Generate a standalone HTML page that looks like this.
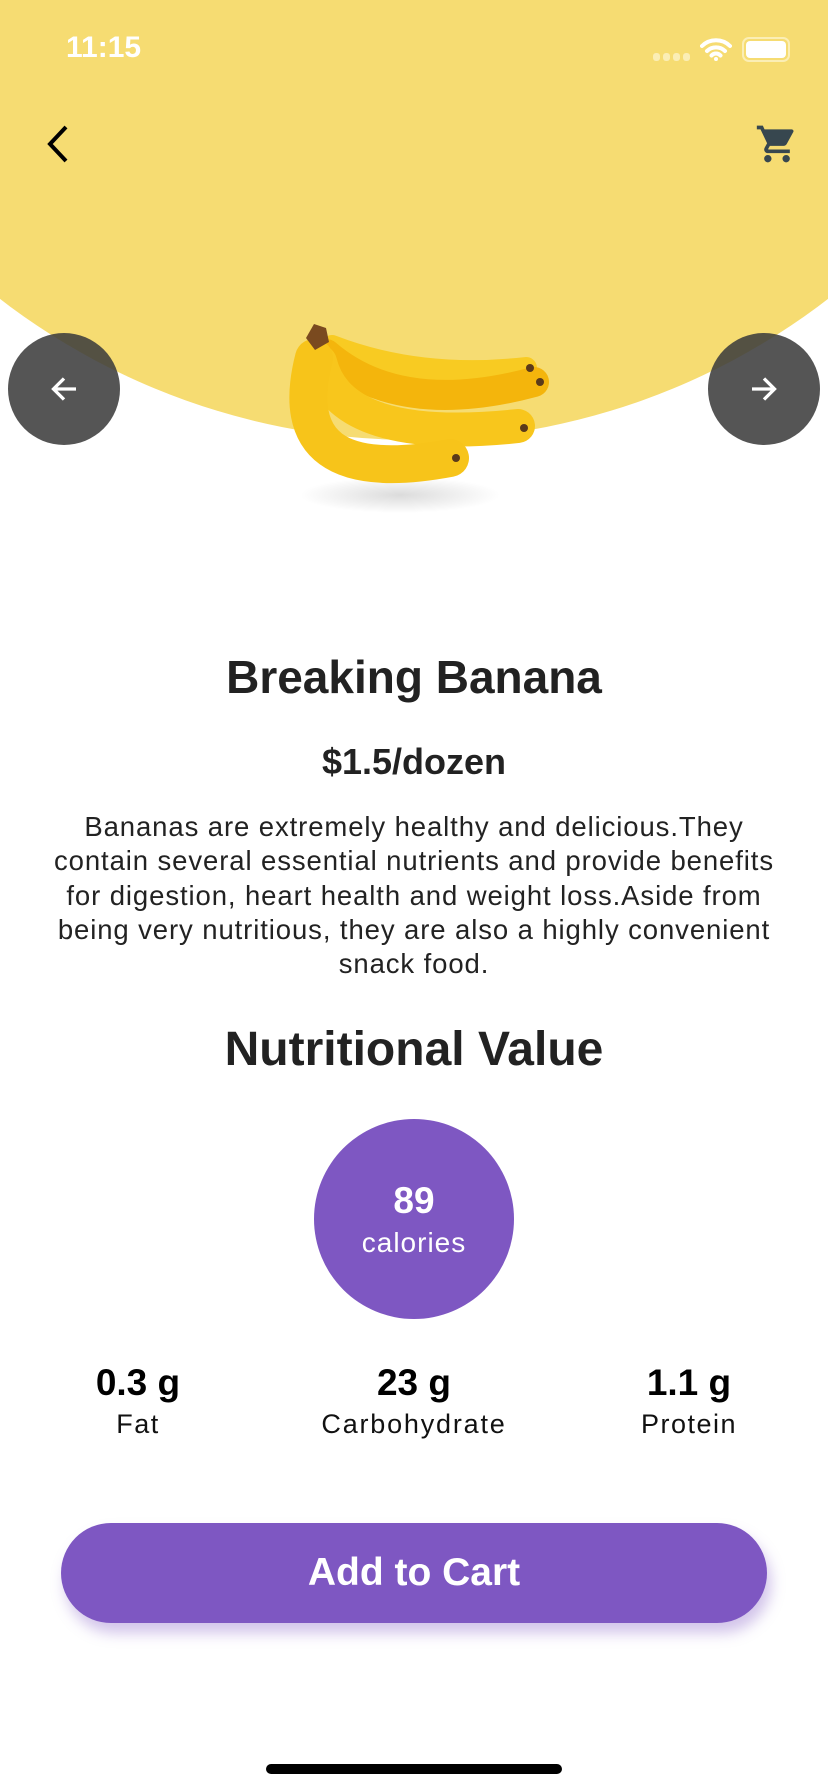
<!DOCTYPE html>
<html><head><meta charset="utf-8"><style>
*{margin:0;padding:0;box-sizing:border-box}
body{width:828px;height:1792px;position:relative;overflow:hidden;background:#fff;font-family:"Liberation Sans",sans-serif;color:#222}
.abs{position:absolute}
.c{position:absolute;left:0;width:828px;text-align:center;white-space:nowrap}
</style></head><body>
<div class="abs" style="left:-264px;top:-916px;width:1356px;height:1356px;border-radius:50%;background:#F6DC72"></div>
<div class="abs" style="left:66px;top:31px;font-size:30px;font-weight:bold;color:#fff">11:15</div>
<div class="abs" style="left:653px;top:53px;width:38px;height:8px;display:flex;gap:3px"><span style="width:7px;height:8px;border-radius:3px;background:#fbeeb5"></span><span style="width:7px;height:8px;border-radius:3px;background:#fbeeb5"></span><span style="width:7px;height:8px;border-radius:3px;background:#fbeeb5"></span><span style="width:7px;height:8px;border-radius:3px;background:#fbeeb5"></span></div>
<svg class="abs" style="left:700px;top:37px" width="32" height="24" viewBox="0 0 32 24"><path d="M2 9a20 20 0 0 1 28 0M7 14a13 13 0 0 1 18 0M11.5 18.5a6 6 0 0 1 9 0" stroke="#fff" stroke-width="4" fill="none" stroke-linecap="round"/><circle cx="16" cy="22" r="2" fill="#fff"/></svg>
<div class="abs" style="left:742px;top:37px;width:48px;height:25px;border:2px solid #fbeeb5;border-radius:7px;padding:2px"><div style="width:100%;height:100%;background:#fff;border-radius:4px"></div></div>
<svg class="abs" style="left:44px;top:124px" width="28" height="40" viewBox="0 0 28 40"><path d="M22 3L6 20l16 17" stroke="#000" stroke-width="4" fill="none"/></svg>
<svg class="abs" style="left:755px;top:122px" width="44" height="44" viewBox="0 0 24 24"><path fill="#37474F" d="M7 18c-1.1 0-2 .9-2 2s.9 2 2 2 2-.9 2-2-.9-2-2-2zM1 2v2h2l3.6 7.590-1.35 2.45c-.16.28-.25.61-.25.96 0 1.1.9 2 2 2h12v-2H7.42c-.14 0-.25-.11-.25-.25l.03-.12.9-1.63h7.45c.75 0 1.410-.41 1.75-1.03l3.58-6.49A1 1 0 0 0 20 4H5.21l-.94-2H1zm16 16c-1.1 0-2 .9-2 2s.9 2 2 2 2-.9 2-2-.9-2-2-2z"/></svg>
<div class="abs" style="left:8px;top:333px;width:112px;height:112px;border-radius:50%;background:rgba(60,60,60,.87)"></div>
<div class="abs" style="left:708px;top:333px;width:112px;height:112px;border-radius:50%;background:rgba(60,60,60,.87)"></div>
<svg class="abs" style="left:46px;top:371px" width="36" height="36" viewBox="0 0 24 24"><path d="M20 12H5M12 5l-7 7 7 7" stroke="#fff" stroke-width="2.2" fill="none"/></svg>
<svg class="abs" style="left:746px;top:371px" width="36" height="36" viewBox="0 0 24 24"><path d="M4 12h15M12 5l7 7-7 7" stroke="#fff" stroke-width="2.2" fill="none"/></svg>
<svg class="abs" style="left:0;top:0" width="828" height="560" viewBox="0 0 828 560">
<defs><radialGradient id="sh" cx="50%" cy="50%" r="50%"><stop offset="0" stop-color="#000" stop-opacity=".14"/><stop offset="1" stop-color="#000" stop-opacity="0"/></radialGradient></defs>
<ellipse cx="400" cy="495" rx="100" ry="18" fill="url(#sh)"/>
<g fill="none" stroke-linecap="round">
<path d="M332 346 Q420 380 526 368" stroke="#F8CB22" stroke-width="22"/>
<path d="M326 354 Q400 418 534 382" stroke="#F4B50C" stroke-width="30"/>
<path d="M320 362 Q340 445 518 426" stroke="#F8C61C" stroke-width="34"/>
<path d="M314 358 Q280 490 450 458" stroke="#F7C41A" stroke-width="38"/>
</g>
<path d="M306 338l8-14 12 4 3 14-14 8z" fill="#7a4a1f"/>
<circle cx="530" cy="368" r="4" fill="#5a3a1a"/><circle cx="540" cy="382" r="4" fill="#5a3a1a"/><circle cx="524" cy="428" r="4" fill="#5a3a1a"/><circle cx="456" cy="458" r="4" fill="#5a3a1a"/>
</svg>
<div class="c" style="top:650px;font-size:46px;font-weight:bold">Breaking Banana</div>
<div class="c" style="top:741px;font-size:36px;font-weight:bold">$1.5/dozen</div>
<div class="c" style="top:810px;font-size:27.5px;line-height:34.3px;letter-spacing:0.9px;color:#222">Bananas are extremely healthy and delicious.They<br>contain several essential nutrients and provide benefits<br>for digestion, heart health and weight loss.Aside from<br>being very nutritious, they are also a highly convenient<br>snack food.</div>
<div class="c" style="top:1022px;font-size:48px;font-weight:bold">Nutritional Value</div>
<div class="abs" style="left:314px;top:1119px;width:200px;height:200px;border-radius:50%;background:#7E57C2"></div>
<div class="c" style="top:1180px;font-size:37px;font-weight:bold;color:#fff">89</div>
<div class="c" style="top:1227px;font-size:28px;letter-spacing:1px;color:#fff">calories</div>
<div class="abs" style="left:38px;width:200px;top:1362px;text-align:center;font-size:37px;font-weight:bold;color:#000">0.3 g</div>
<div class="abs" style="left:314px;width:200px;top:1362px;text-align:center;font-size:37px;font-weight:bold;color:#000">23 g</div>
<div class="abs" style="left:589px;width:200px;top:1362px;text-align:center;font-size:37px;font-weight:bold;color:#000">1.1 g</div>
<div class="abs" style="left:38px;width:200px;top:1409px;text-align:center;font-size:27px;letter-spacing:1.5px;color:#111">Fat</div>
<div class="abs" style="left:264px;width:300px;top:1409px;text-align:center;font-size:27px;letter-spacing:1.8px;color:#111">Carbohydrate</div>
<div class="abs" style="left:589px;width:200px;top:1409px;text-align:center;font-size:27px;letter-spacing:1.5px;color:#111">Protein</div>
<div class="abs" style="left:61px;top:1523px;width:706px;height:100px;border-radius:50px;background:#7E57C2;box-shadow:4px 10px 14px rgba(126,87,194,.35);color:#fff;font-size:39px;font-weight:bold;text-align:center;line-height:100px">Add to Cart</div>
<div class="abs" style="left:266px;top:1764px;width:296px;height:10px;border-radius:5px;background:#000"></div>
</body></html>
